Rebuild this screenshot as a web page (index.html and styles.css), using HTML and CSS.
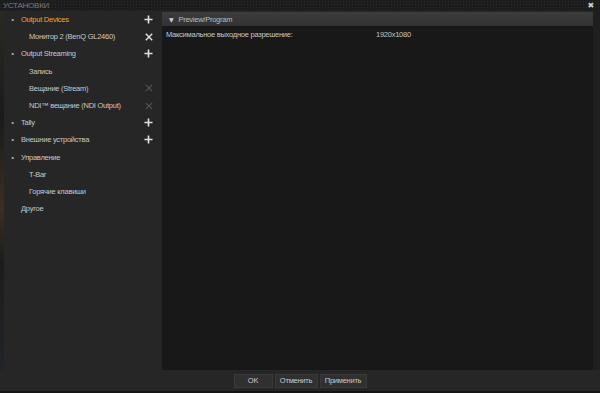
FILE: index.html
```html
<!DOCTYPE html>
<html lang="ru">
<head>
  <meta charset="UTF-8" />
  <title>Установки</title>
  <link rel="stylesheet" href="styles.css">
</head>
<body>
  <div class="window">
    <div class="titlebar">
      <span class="title">УСТАНОВКИ</span>
      <span class="close">&#x2716;</span>
    </div>

    <div class="main">
      <div class="edge"></div>

      <div class="tree">
        <div class="row">
          <span class="bullet">•</span><span class="label active">Output Devices</span>
          <svg class="icon plus" viewBox="0 0 10 10"><path d="M5 0.5V9.5M0.5 5H9.5"/></svg>
        </div>
        <div class="row sub">
          <span class="label">Монитор 2 (BenQ GL2460)</span>
          <svg class="icon cross" viewBox="0 0 10 10"><path d="M1 1L9 9M9 1L1 9"/></svg>
        </div>
        <div class="row">
          <span class="bullet">•</span><span class="label">Output Streaming</span>
          <svg class="icon plus" viewBox="0 0 10 10"><path d="M5 0.5V9.5M0.5 5H9.5"/></svg>
        </div>
        <div class="row sub">
          <span class="label">Запись</span>
        </div>
        <div class="row sub">
          <span class="label">Вещание (Stream)</span>
          <svg class="icon cross off" viewBox="0 0 10 10"><path d="M1 1L9 9M9 1L1 9"/></svg>
        </div>
        <div class="row sub">
          <span class="label">NDI™ вещание (NDI Output)</span>
          <svg class="icon cross off" viewBox="0 0 10 10"><path d="M1 1L9 9M9 1L1 9"/></svg>
        </div>
        <div class="row">
          <span class="bullet">•</span><span class="label">Tally</span>
          <svg class="icon plus" viewBox="0 0 10 10"><path d="M5 0.5V9.5M0.5 5H9.5"/></svg>
        </div>
        <div class="row">
          <span class="bullet">•</span><span class="label">Внешние устройства</span>
          <svg class="icon plus" viewBox="0 0 10 10"><path d="M5 0.5V9.5M0.5 5H9.5"/></svg>
        </div>
        <div class="row">
          <span class="bullet">•</span><span class="label">Управление</span>
        </div>
        <div class="row sub">
          <span class="label">T-Bar</span>
        </div>
        <div class="row sub">
          <span class="label">Горячие клавиши</span>
        </div>
        <div class="row">
          <span class="bullet"></span><span class="label">Другое</span>
        </div>
      </div>

      <div class="content">
        <div class="section-head">
          <span class="arrow">▼</span>
          <span>Preview/Program</span>
        </div>
        <div class="prop">
          <span class="prop-name">Максимальное выходное разрешение:</span>
          <span class="prop-value">1920x1080</span>
        </div>
      </div>

      <div class="edge-right"></div>
    </div>

    <div class="footer">
      <button class="btn ok">OK</button>
      <button class="btn cancel">Отменить</button>
      <button class="btn apply">Применить</button>
    </div>
  </div>
</body>
</html>
```

FILE: styles.css
```css
body {
  margin: 0;
  background-color: #111;
  font-family: 'Liberation Sans', Arial, sans-serif;
  font-size: 7.5px;
  letter-spacing: -0.25px;
  color: #c8c8c8;
}

.window {
  width: 600px;
  height: 393px;
  display: flex;
  flex-direction: column;
  background-color: #262626;
  overflow: hidden;
}

.titlebar {
  height: 11px;
  flex-shrink: 0;
  display: flex;
  align-items: center;
  justify-content: space-between;
  padding: 0 6px 0 3px;
  background-color: #1c1c1c;
  background-image: radial-gradient(#2c2c2c 35%, transparent 40%);
  background-size: 3px 3px;
}

.title {
  color: #7a7a7a;
  font-size: 8px;
}

.close {
  color: #d0d0d0;
  font-size: 8px;
  font-family: 'DejaVu Sans', sans-serif;
}

.main {
  flex: 1;
  display: flex;
  min-height: 0;
}

.edge {
  width: 4px;
  flex-shrink: 0;
  background: linear-gradient(#2a2a22, #1a1a1a 30%, #3a3020 55%, #1c1c1c 70%, #202428);
}

.tree {
  width: 158px;
  flex-shrink: 0;
  background-color: #262626;
}

.row {
  height: 17.2px;
  display: flex;
  align-items: center;
  position: relative;
}

.bullet {
  width: 17px;
  text-align: center;
  font-size: 8px;
  color: #aaa;
}

.row.sub .label {
  padding-left: 8px;
  margin-left: 17px;
}

.row.sub .label {
  padding-left: 8px;
}

.label {
  color: #c8c8c8;
  white-space: nowrap;
}

.label.active {
  color: #f2a81e;
}

.icon {
  position: absolute;
  right: 9px;
  width: 9px;
  height: 9px;
  fill: none;
  stroke: #e0e0e0;
  stroke-width: 1.8;
}

.icon.cross {
  width: 8px;
  height: 8px;
  right: 9.5px;
}

.icon.off {
  stroke: #555;
  stroke-width: 1.4;
}

.content {
  flex: 1;
  margin-top: 1px;
  background-color: #181818;
  display: flex;
  flex-direction: column;
}

.section-head {
  height: 14px;
  display: flex;
  align-items: center;
  gap: 5px;
  padding-left: 7px;
  background: linear-gradient(#3d3d3d, #323232);
  color: #bcbcbc;
}

.arrow {
  font-size: 6px;
  color: #d0d0d0;
  font-family: 'DejaVu Sans', sans-serif;
}

.prop {
  display: flex;
  align-items: center;
  height: 17px;
  padding-left: 4px;
}

.prop-name {
  width: 210px;
}

.edge-right {
  width: 7px;
  flex-shrink: 0;
  background-color: #1f1f1f;
}

.footer {
  height: 23px;
  flex-shrink: 0;
  display: flex;
  justify-content: center;
  align-items: center;
  gap: 2px;
  border-bottom: 2px solid #141414;
  box-sizing: border-box;
}

.btn {
  height: 14px;
  padding: 0;
  border: 1px solid #3a3a3a;
  background-color: #303030;
  color: #c8c8c8;
  font-family: 'Liberation Sans', Arial, sans-serif;
  font-size: 7.5px;
  letter-spacing: -0.25px;
}

.btn.ok {
  width: 39px;
}

.btn.cancel {
  width: 43px;
}

.btn.apply {
  width: 47px;
}
```
